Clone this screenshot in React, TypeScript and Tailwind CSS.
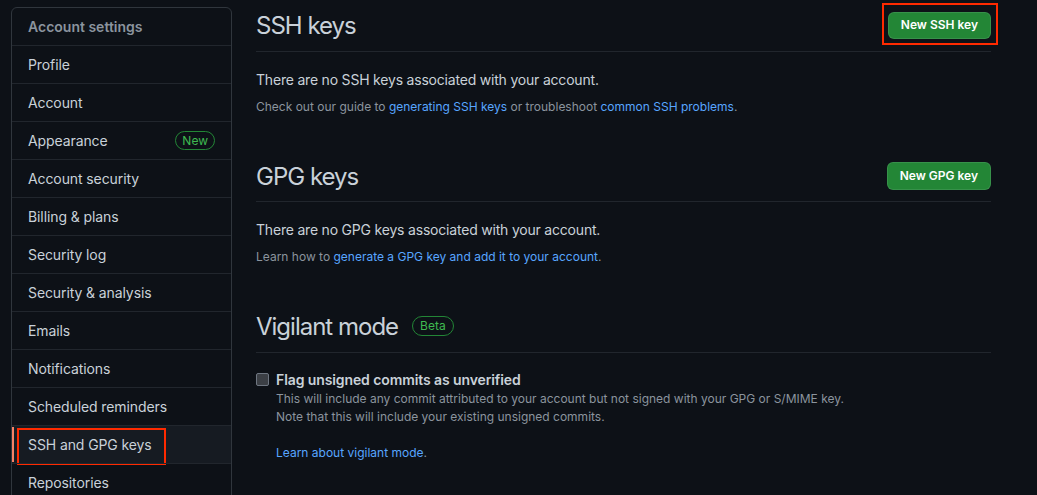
import React from "react";

const items = [
  "Profile",
  "Account",
  "Appearance",
  "Account security",
  "Billing & plans",
  "Security log",
  "Security & analysis",
  "Emails",
  "Notifications",
  "Scheduled reminders",
  "SSH and GPG keys",
  "Repositories",
  "Packages",
  "Organizations",
];

export default function App() {
  return (
    <div
      className="min-h-screen w-full bg-[#0d1117] text-[#c9d1d9]"
      style={{ fontFamily: "Inter, 'Noto Sans', sans-serif" }}
    >
      <div className="flex pl-[11px] pt-[7px] gap-[24px]">
        <nav className="w-[221px] shrink-0 border border-[#30363d] rounded-[6px] overflow-hidden">
          <div className="h-[37px] flex items-center px-[16px] text-[14px] font-semibold text-[#8b949e]">
            Account settings
          </div>
          {items.map((it) => {
            const sel = it === "SSH and GPG keys";
            return (
              <div
                key={it}
                className={
                  "relative h-[38px] border-t border-[#21262d] flex items-center px-[16px] text-[14px] tracking-[-0.1px] " +
                  (sel ? "bg-[#161b22]" : "")
                }
              >
                {sel && (
                  <span className="absolute left-0 top-[1px] bottom-[1px] w-[2px] bg-[#f78166]" />
                )}
                {sel && (
                  <span className="absolute left-[5px] top-[2px] w-[149px] h-[37px] border-[2.5px] border-[#ff2a00]" />
                )}
                <span className="flex-1">{it}</span>
                {it === "Appearance" && (
                  <span className="text-[12px] leading-[16px] tracking-normal text-[#3fb950] border border-[#238636] rounded-full px-[6px] py-[0.5px]">
                    New
                  </span>
                )}
              </div>
            );
          })}
        </nav>

        <main className="w-[735px] shrink-0 -mt-[1px]">
          {/* SSH keys */}
          <section>
            <div className="flex items-center justify-between h-[38px] box-content border-b border-[#21262d] pb-[7px]">
              <h2 className="text-[24px] font-normal tracking-[-1px] pt-[2px]">SSH keys</h2>
              <div className="relative">
                <button className="h-[27px] px-[12px] rounded-[6px] bg-[#238636] border border-[rgba(240,246,252,0.1)] text-white text-[12px] font-semibold">
                  New SSH key
                </button>
                <span className="absolute -left-[6px] -right-[7px] -top-[8px] -bottom-[6px] border-[2.5px] border-[#ff2a00]" />
              </div>
            </div>
            <p className="mt-[17px] text-[14px] leading-[21px] tracking-[-0.2px]">
              There are no SSH keys associated with your account.
            </p>
            <p className="mt-[8px] text-[12px] leading-[18px] text-[#8b949e]">
              Check out our guide to{" "}
              <span className="text-[#58a6ff]">generating SSH keys</span> or
              troubleshoot{" "}
              <span className="text-[#58a6ff]">common SSH problems</span>.
            </p>
          </section>

          {/* GPG keys */}
          <section className="mt-[41px]">
            <div className="flex items-center justify-between h-[38px] box-content border-b border-[#21262d] pb-[6px]">
              <h2 className="text-[24px] font-normal tracking-[-1px] pt-[2px]">GPG keys</h2>
              <button className="h-[28px] px-[12px] rounded-[6px] bg-[#238636] border border-[rgba(240,246,252,0.1)] text-white text-[12px] font-semibold">
                New GPG key
              </button>
            </div>
            <p className="mt-[17px] text-[14px] leading-[21px] tracking-[-0.2px]">
              There are no GPG keys associated with your account.
            </p>
            <p className="mt-[8px] text-[12px] leading-[18px] text-[#8b949e]">
              Learn how to{" "}
              <span className="text-[#58a6ff]">
                generate a GPG key and add it to your account
              </span>
              .
            </p>
          </section>

          {/* Vigilant mode */}
          <section className="mt-[41px]">
            <div className="flex items-center h-[38px] box-content border-b border-[#21262d] pb-[7px]">
              <h2 className="text-[24px] font-normal tracking-[-1px] pt-[2px]">Vigilant mode</h2>
              <span className="ml-[14px] text-[12px] leading-[18px] text-[#3fb950] border border-[#238636] rounded-full px-[7px]">
                Beta
              </span>
            </div>
            <div className="mt-[16px] flex">
              <span className="mt-[4px] w-[13px] h-[13px] rounded-[2px] bg-[#3b3f45] border border-[#6e7681] shrink-0" />
              <div className="ml-[7px]">
                <div className="text-[14px] leading-[21px] font-semibold tracking-[-0.1px]">
                  Flag unsigned commits as unverified
                </div>
                <p className="text-[12px] leading-[18px] text-[#8b949e]">
                  This will include any commit attributed to your account but
                  not signed with your GPG or S/MIME key.
                  <br />
                  Note that this will include your existing unsigned commits.
                </p>
                <p className="mt-[18px] text-[12px] leading-[18px] text-[#8b949e]">
                  <span className="text-[#58a6ff]">Learn about vigilant mode</span>.
                </p>
              </div>
            </div>
          </section>
        </main>
      </div>
    </div>
  );
}
